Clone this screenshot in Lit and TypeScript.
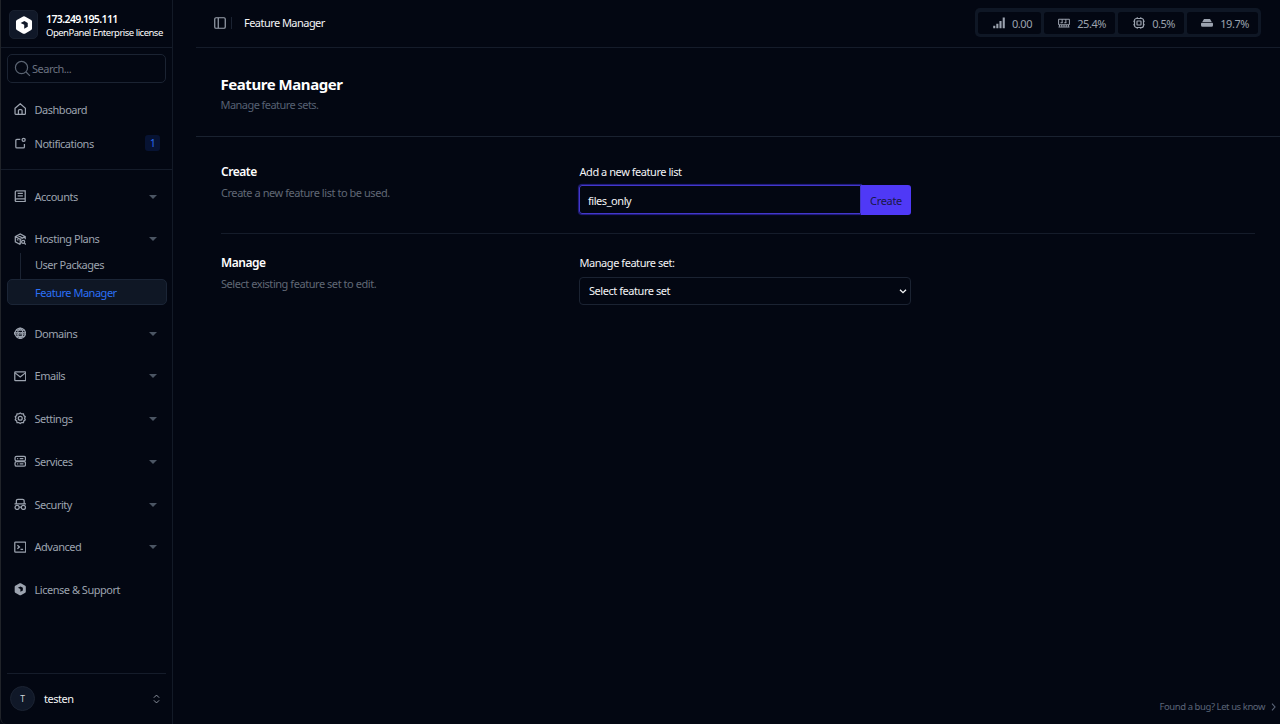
import { LitElement, html, css, svg, nothing } from "lit";
import { customElement } from "lit/decorators.js";

const logo = svg`<path fill="currentColor" stroke="none" fill-rule="evenodd" d="M10.800.5Q12 0 13.200.5L21.600 5.300Q22.700 6 22.700 7.300V16.700Q22.700 18 21.600 18.700L13.200 23.500Q12 24 10.800 23.500L2.400 18.700Q1.300 18 1.300 16.700V7.300Q1.300 6 2.400 5.300ZM7.500 9.300 12.300 11.500V17L17 14.300V9.300L12.500 6.600Z"/>`;

const icons = {
  logo,
  search: svg`<circle cx="10.6" cy="10.6" r="8.6"/><path d="m17 17 5.5 5.5"/>`,
  home: svg`<path d="M2 10.2 12 1.5l10 8.7V20a2 2 0 0 1-2 2H4a2 2 0 0 1-2-2ZM8.500 22v-7.500a2 2 0 0 1 2-2h3a2 2 0 0 1 2 2V22"/>`,
  bell: svg`<path d="M12 4.500H5.500a2 2 0 0 0-2 2V19a2 2 0 0 0 2 2H18a2 2 0 0 0 2-2v-5.500"/><circle cx="18.500" cy="5.500" r="3"/>`,
  book: svg`<path d="M2.500 19.500V4a2.500 2.500 0 0 1 2.500-2.500H21.500V17H5a2.500 2.500 0 0 0 0 5.500H21.500V17M7 6.500h10M7 11.500h10"/>`,
  box: svg`<path d="M12 22 2.500 17V7L12 2l9.500 5v5M2.500 7 12 12l9.500-5M12 12v10M7 4.500l9.500 5M5.500 12.500l3 1.500"/><circle cx="17.500" cy="17" r="3"/><path d="m20 19.500 2.500 2.500"/>`,
  globe: svg`<circle cx="12" cy="12" r="10"/><path d="M4 6h16M4 18h16M12 2c-7 6-7 14 0 20M12 2c7 6 7 14 0 20"/><path stroke-width="5" d="M0 12h24"/><path stroke="#030712" stroke-width=".8" d="m2.500 11 1.500 2 1.500-2L7 13M9.500 11l1.500 2 1.500-2 1.500 2M17 11l1.500 2 1.500-2 1.500 2"/>`,
  mail: svg`<rect x="1.500" y="3.500" width="21" height="17" rx="1.500"/><path d="m2 5.500 10 8 10-8"/>`,
  gear: svg`<path d="m12 1.800 2.800 2 3.400-.3.700 3.400 2.700 2.100L20.300 12l1.300 3-2.700 2.100-.7 3.400-3.400-.3-2.800 2-2.800-2-3.400.3-.7-3.400L2.400 15l1.300-3-1.300-3 2.700-2.100.7-3.400 3.400.3Z"/><circle cx="12" cy="12" r="3.800"/>`,
  server: svg`<rect x="2" y="2.500" width="20" height="9" rx="3"/><rect x="2" y="12.500" width="20" height="9" rx="3"/><path d="M6 7h2M11 7h7M6 17h2M11 17h7"/>`,
  spy: svg`<path d="M1 11.500h22M4.500 11.500V5.500a3 3 0 0 1 3-3h9a3 3 0 0 1 3 3v6"/><circle cx="6" cy="18" r="4"/><circle cx="18" cy="18" r="4"/><path d="M10 17.500h4"/>`,
  terminal: svg`<rect x="1.500" y="2" width="21" height="19.500" rx="1.500"/><path d="m6.500 8 4 3.500-4 3.500M12.500 16h5"/>`,
  sidebar: svg`<rect x="1.500" y="1.500" width="21" height="21" rx="2.500"/><path d="M8.500 2v20"/>`,
  bars: svg`<path stroke-width="4.200" d="M2.500 22.500v-5M8.700 22.500v-9M15 22.500V8M21.500 22.500V1"/>`,
  ram: svg`<path stroke-width="2" d="M1.200 4.500h21.600V15.500H1.200ZM1 20h22M8.300 4.500V12M15.700 4.500V12M5 11.500h4M12.500 11.500h4M3 16v3.500M7.500 16v3.500M12 16v3.500M16.500 16v3.500M21 16v3.500"/>`,
  cpu: svg`<rect x="3" y="3" width="18" height="18" rx="4"/><rect x="8" y="8" width="8" height="8" rx="1"/><path d="M8.500.5v2M15.500.5v2M8.500 21.500v2M15.500 21.500v2M.5 8.500h2M.5 15.500h2M21.500 8.500h2M21.500 15.500h2"/>`,
  disk: svg`<path fill="currentColor" stroke="none" d="M6 4h12l3.500 6h-19ZM2 11.500h20a2 2 0 0 1 2 2V16.500a3 3 0 0 1-3 3H3a3 3 0 0 1-3-3V13.500a2 2 0 0 1 2-2Z"/>`,
  sort: svg`<path d="m5 8.500 7-7 7 7M5 15.500l7 7 7-7"/>`,
  chevronRight: svg`<path d="m8 3 8 9-8 9"/>`,
  chevronDown: svg`<path d="m3 8 9 9 9-9"/>`,
};
type IconName = keyof typeof icons;

const icon = (name: IconName, cls = "") =>
  html`<svg class="icon ${cls}" viewBox="0 0 24 24" fill="none" stroke="currentColor">${icons[name]}</svg>`;

interface Entry { label: string; icon: IconName; cls: string; }

const groups: Entry[] = [
  { label: "Domains", icon: "globe", cls: "domains" },
  { label: "Emails", icon: "mail", cls: "emails" },
  { label: "Settings", icon: "gear", cls: "settings" },
  { label: "Services", icon: "server", cls: "services" },
  { label: "Security", icon: "spy", cls: "security" },
  { label: "Advanced", icon: "terminal", cls: "advanced" },
];

const stats: { icon: IconName; value: string; cls: string }[] = [
  { icon: "bars", value: "0.00", cls: "load" },
  { icon: "ram", value: "25.4%", cls: "mem" },
  { icon: "cpu", value: "0.5%", cls: "cpu" },
  { icon: "disk", value: "19.7%", cls: "disk" },
];

@customElement("app-root")
export class AppRoot extends LitElement {
  static styles = css`
    :host {
      display: flex;
      box-sizing: border-box;
      width: 100%;
      height: 724px;
      overflow: hidden;
      background: #030712;
      color: #9ca3af;
      font: 11px/16px "Noto Sans", "Open Sans", sans-serif;
      letter-spacing: -0.48px;
    }
    * { box-sizing: border-box; }
    h1, h2, p { margin: 0; }
    .icon { display: block; width: 12px; height: 12px; flex: none; stroke-width: 2.4; }
    .sidebar {
      width: 173px; flex: none; display: flex; flex-direction: column;
      border-left: 1px solid #202329; border-right: 1px solid #131a27;
      border-bottom-left-radius: 6px;
    }
    .brand { height: 48px; display: flex; align-items: center; gap: 8px; padding: 2px 0 0 8px; border-bottom: 1px solid #151c2a; }
    .mark { width: 29px; height: 29px; flex: none; display: grid; place-items: center; border-radius: 5px; background: #101828; border: 1px solid #18202f; color: #fff; }
    .mark .icon { width: 18px; height: 18px; }
    .names { line-height: 13px; white-space: nowrap; color: #fff; padding-top: 3px; }
    .names b { display: block; font-size: 10.500px; font-weight: 600; letter-spacing: -0.600px; }
    .names span { display: block; font-size: 9.500px; letter-spacing: -0.500px; }
    .search { height: 29px; margin: 6px 6px 0; display: flex; align-items: center; gap: 1px; padding-left: 6px; border: 1px solid #1b2332; border-radius: 5px; color: #6b7280; letter-spacing: -0.500px; }
    .search span { padding-top: 1px; }
    .search .icon { width: 17px; height: 17px; color: #5b6472; stroke-width: 1.7; }
    .row { display: flex; align-items: center; height: 33px; padding: 0 15px 0 12.500px; gap: 8.500px; white-space: nowrap; }
    .row .icon { width: 12.500px; height: 12.500px; margin-top: -1px; }
    .row span { flex: 1; }
    .top { padding: 10px 0 9px; border-bottom: 1px solid #151c2a; }
    .top .row + .row { margin-top: 1px; }
    .row .badge { flex: none; width: 15px; height: 16px; margin-right: -3px; border-radius: 3px; background: #071333; color: #2b70f5; text-align: center; font-size: 10px; line-height: 16px; margin-top: -1px; }
    .caret { width: 0; height: 0; border: 4px solid transparent; border-top-color: #4b5563; border-bottom: 0; }
    .nav { padding-top: 10px; display: flex; flex-direction: column; gap: 9.750px; }
    .sub { padding: 0 5px 0 6px; margin: -3px 0 2.500px; display: flex; flex-direction: column; }
    .child { height: 26px; margin-left: 13px; padding-left: 14px; border-left: 1px solid #1b2332; line-height: 24px; }
    .child.active { margin-left: 0; padding-left: 27px; height: 26px; border: 1px solid #1b2536; border-radius: 5px; background: #0f1725; color: #2b70f5; line-height: 26px; }
    .user { margin: auto 6px 0; height: 51px; border-top: 1px solid #151c2a; display: flex; align-items: center; gap: 9px; padding: 0 5px 1px 3px; color: #f3f4f6; }
    .avatar { width: 25px; height: 25px; border-radius: 50%; background: #101828; border: 1px solid #1b2332; color: #d1d5db; text-align: center; font-size: 8.500px; line-height: 24px; letter-spacing: 0; }
    .username { padding-top: 1px; }
    .user .icon { width: 9px; height: 10px; margin-left: auto; color: #9ca3af; }
    .page { flex: 1; min-width: 0; padding-left: 23px; display: flex; flex-direction: column; }
    .bar { height: 48px; flex: none; display: flex; align-items: center; padding: 0 19px 2px 18px; border-bottom: 1px solid #151c2a; }
    .crumb { margin-left: 5px; padding-left: 12px; border-left: 1px solid #1b2332; line-height: 12px; color: #f3f4f6; letter-spacing: -0.540px; }
    .stats { margin-left: auto; height: 29px; display: flex; gap: 3px; padding: 4px 3px 3px; border-radius: 5px; background: #0f1725; color: #9ca3af; letter-spacing: -0.450px; }
    .stat { display: flex; align-items: center; justify-content: flex-end; gap: 7px; padding: 1px 9px 0 0; background: #030712; border-radius: 3px; }
    .stat .icon { margin-top: -1px; }
    .stat.load { width: 63px; } .stat.mem { width: 71px; } .stat.cpu { width: 66px; } .stat.disk { width: 71px; }
    .hero { height: 89px; padding: 26px 24.500px 0; border-bottom: 1px solid #1a2230; }
    .hero h1 { font-size: 15px; line-height: 20px; font-weight: 700; color: #fff; letter-spacing: -0.450px; }
    .hero p { margin-top: 4px; line-height: 14px; color: #566072; letter-spacing: -0.550px; }
    .section { display: grid; grid-template-columns: 358px 332px; margin: 0 25px; height: 97px; padding-top: 27px; border-bottom: 1px solid #151c2a; }
    .section.last { height: 90px; padding-top: 21px; border: 0; }
    .section h2 { font-size: 12px; line-height: 16px; font-weight: 600; color: #fff; }
    .section p { margin-top: 5px; line-height: 16px; color: #606775; letter-spacing: -0.450px; }
    .label { display: block; padding-left: .5px; line-height: 16px; color: #f3f4f6; letter-spacing: -0.450px; }
    .form { display: flex; margin-top: 5px; height: 30px; letter-spacing: -0.450px; }
    .input { flex: 1; padding: 2px 0 0 8px; line-height: 26px; color: #f3f4f6; border: 1px solid #4338ca; box-shadow: 0 0 1px 1px #26208a; border-radius: 3px 0 0 3px; margin-bottom: 1px; }
    .create { width: 50px; background: #4f39f6; color: #191847; border-radius: 0 3px 3px 0; text-align: center; line-height: 32px; letter-spacing: -0.300px; }
    .select { display: flex; align-items: center; justify-content: space-between; margin-top: 6px; height: 28px; padding: 0 3px 0 9px; border: 1px solid #1b2332; border-radius: 4px; color: #f3f4f6; letter-spacing: -0.450px; }
    .select .icon { width: 8px; height: 8px; stroke-width: 4; }
    .bug { margin: auto 2px 9px auto; display: flex; align-items: center; gap: 4px; font-size: 9.500px; color: #5b6578; letter-spacing: -0.430px; }
    .bug .icon { width: 9px; height: 10px; stroke-width: 3; }
  `;

  private row(e: Entry, end: unknown = html`<i class="caret"></i>`) {
    return html`<div class="row ${e.cls}">${icon(e.icon)}<span>${e.label}</span>${end}</div>`;
  }

  render() {
    return html`
      <aside class="sidebar">
        <div class="brand">
          <div class="mark">${icon("logo")}</div>
          <div class="names"><b>173.249.195.111</b><span>OpenPanel Enterprise license</span></div>
        </div>
        <div class="search">${icon("search")}<span>Search...</span></div>
        <div class="top">
          ${this.row({ label: "Dashboard", icon: "home", cls: "dash" }, nothing)}
          ${this.row({ label: "Notifications", icon: "bell", cls: "notes" }, html`<span class="badge">1</span>`)}
        </div>
        <nav class="nav">
          ${this.row({ label: "Accounts", icon: "book", cls: "accounts" })}
          <div class="group">
            ${this.row({ label: "Hosting Plans", icon: "box", cls: "plans" })}
            <div class="sub">
              <div class="child"><span>User Packages</span></div>
              <div class="child active"><span>Feature Manager</span></div>
            </div>
          </div>
          ${groups.map((g) => this.row(g))}
          ${this.row({ label: "License & Support", icon: "logo", cls: "license" }, nothing)}
        </nav>
        <div class="user"><div class="avatar">T</div><span class="username">testen</span>${icon("sort")}</div>
      </aside>
      <main class="page">
        <header class="bar">
          ${icon("sidebar")}
          <div class="crumb">Feature Manager</div>
          <div class="stats">
            ${stats.map((s) => html`<div class="stat ${s.cls}">${icon(s.icon)}<span>${s.value}</span></div>`)}
          </div>
        </header>
        <div class="hero"><h1><span>Feature Manager</span></h1><p>Manage feature sets.</p></div>
        <section class="section">
          <div><h2>Create</h2><p>Create a new feature list to be used.</p></div>
          <div>
            <span class="label">Add a new feature list</span>
            <div class="form"><div class="input">files_only</div><div class="create">Create</div></div>
          </div>
        </section>
        <section class="section last">
          <div><h2>Manage</h2><p>Select existing feature set to edit.</p></div>
          <div>
            <span class="label">Manage feature set:</span>
            <div class="select"><span>Select feature set</span>${icon("chevronDown")}</div>
          </div>
        </section>
        <div class="bug"><span>Found a bug? Let us know</span>${icon("chevronRight")}</div>
      </main>
    `;
  }
}
